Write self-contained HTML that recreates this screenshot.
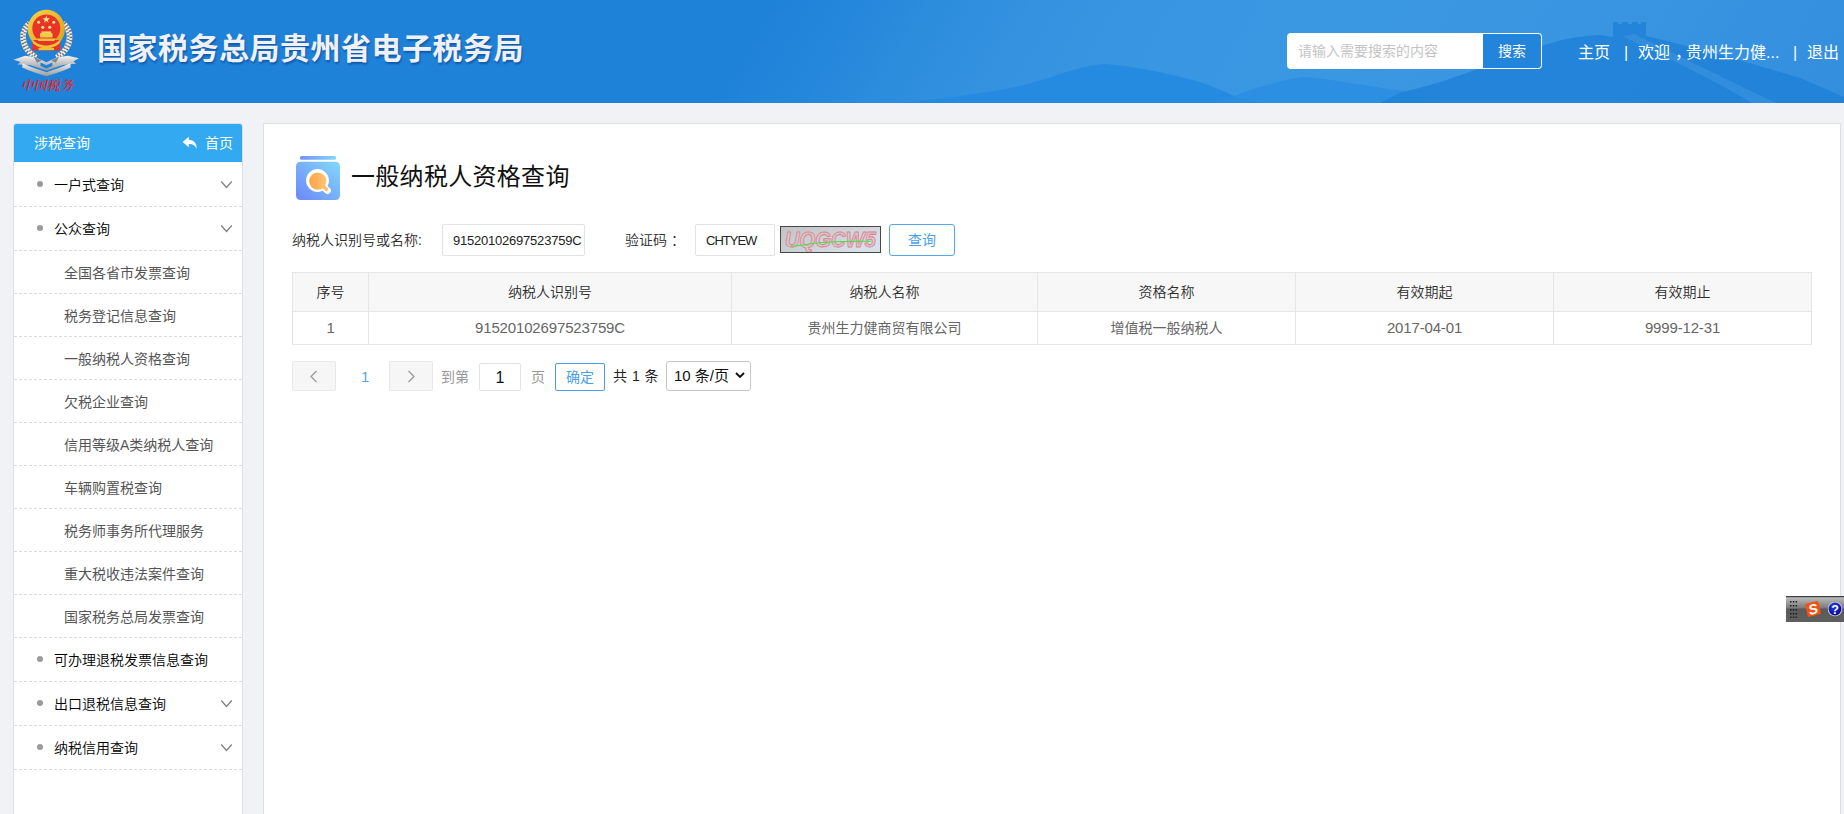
<!DOCTYPE html>
<html lang="zh-CN">
<head>
<meta charset="utf-8">
<title>一般纳税人资格查询</title>
<style>
*{box-sizing:border-box;margin:0;padding:0}
html,body{width:1844px;height:814px;overflow:hidden;background:#f0f2f5;
  font-family:"Liberation Sans","Noto Sans CJK SC",sans-serif;font-size:14px;color:#333}
.abs{position:absolute}
#hdr{position:absolute;left:0;top:0;width:1844px;height:103px;overflow:hidden;
  background:linear-gradient(120deg,#1f82d9 0px,#1f82d9 670.9px,#2587db 744.5px,#2d8ddd 818.1px,#3492e0 900.4px,#3996e2 1030.3px,#3a97e2 1194.8px,#3995e1 1411.3px,#348fdf 1622.7px)}
#hdr svg.bg{position:absolute;left:0;top:0}
#title{position:absolute;left:97px;top:27px;font-size:30px;line-height:44px;font-weight:bold;color:#f0f1f6;
  letter-spacing:0.5px;white-space:nowrap;text-shadow:1px 2px 2px rgba(0,40,110,.45)}
#search{position:absolute;left:1287px;top:33px;width:255px;height:36px;background:#fff;border-radius:4px;overflow:hidden}
#search .ph{position:absolute;left:11px;top:0;line-height:36px;font-size:14px;color:#c4c4c4;white-space:nowrap}
#search .btn{position:absolute;left:196px;top:1px;width:58px;height:34px;background:#2384dc;border-radius:0 3px 3px 0;color:#fff;
  font-size:14px;line-height:34px;text-align:center}
.nav{position:absolute;top:39px;color:#fff;font-size:16px;line-height:28px;white-space:nowrap}

#side{position:absolute;left:13px;top:123px;width:230px;height:700px;background:#fff;border:1px solid #dfe0e4;border-radius:3px 3px 0 0}
#side .head{position:absolute;left:0;top:0;width:228px;height:38px;background:#33a9f1;color:#fff;border-radius:2px 2px 0 0}
#side .head span{position:absolute;top:0;line-height:38px;font-size:14px}
.mi{position:absolute;left:0;width:228px;border-bottom:1px dashed #dcdcdc}
.mi.t{height:44px}
.mi.s{height:43px}
.mi span{position:absolute;top:0;white-space:nowrap;font-size:14px}
.mi.t span{left:40px;line-height:45px;color:#000;font-weight:350}
.mi.s span{left:50px;line-height:44px;color:#555}
.mi.t i{position:absolute;left:23px;top:17.5px;width:6px;height:6px;border-radius:50%;background:#9a9a9a}
.mi svg{position:absolute;left:206px;top:17.500px}

#main{position:absolute;left:263px;top:123px;width:1578px;height:700px;background:#fff;border:1px solid #dddee2}
#ptitle{position:absolute;left:351px;top:159px;font-size:24px;line-height:36px;color:#111;white-space:nowrap;letter-spacing:0.3px}
.lbl{position:absolute;top:224px;line-height:32px;font-size:14px;color:#2c2c2c;font-weight:350;white-space:nowrap}
.inp{position:absolute;top:224px;height:32px;border:1px solid #e2e2e2;border-radius:2px;background:#fff;
  font-size:13px;line-height:31px;color:#222;padding-left:10px;white-space:nowrap;overflow:hidden;letter-spacing:-0.22px}
#qbtn{position:absolute;left:889px;top:224px;width:66px;height:32px;border:1px solid #53a6ea;border-radius:3px;background:#fff;
  color:#4a9fe8;font-size:14px;line-height:30px;text-align:center}
table{position:absolute;left:292px;top:272px;width:1519px;border-collapse:collapse;table-layout:fixed}
th,td{border:1px solid #e6e6e6;text-align:center;font-weight:normal;font-size:14px;white-space:nowrap;padding:0}
th{height:39px;background:#f7f7f7;color:#2c2c2c;font-weight:350}
td{height:33px;color:#666;padding-bottom:3px}
td.n{font-size:15px;letter-spacing:-0.15px;padding-bottom:1px}
th{padding-bottom:2px}
.pg{position:absolute;font-size:14px;white-space:nowrap}
.pbtn{position:absolute;top:361px;width:44px;height:30px;background:#f6f6f6;border:1px solid #e8e8e8;border-radius:2px}
</style>
</head>
<body>
<div id="hdr">
<svg class="bg" width="1844" height="103" viewBox="0 0 1844 103">
  <path d="M900 103 C940 99,980 94,1010 88 C1050 80,1075 66,1105 64 C1135 66,1170 74,1200 82 C1215 87,1225 92,1237 97 L1262 103 Z" fill="#2389e0" opacity=".9"/>
  <path d="M1215 103 C1240 94,1275 80,1305 77 C1340 80,1375 88,1405 91 L1440 103 Z" fill="#2a8ce0" opacity=".75"/>
  <path d="M1380 103 L1402 92 C1440 84,1480 68,1520 54 C1545 44,1570 36,1600 35 L1613 37 L1613 22 L1618 22 L1618 24 L1622 24 L1622 22 L1628 22 L1628 24 L1632 24 L1632 22 L1638 22 L1638 24 L1641 24 L1641 22 L1646 22 L1646 36 C1690 46,1740 60,1800 78 L1844 97 L1844 103 Z" fill="#1e80d7" opacity=".82"/>
  <path d="M1622 36 L1634 34 C1670 52,1720 76,1776 103 L1752 103 C1710 78,1660 54,1622 36 Z" fill="#5aa8ea" opacity=".28"/>
</svg>
<svg class="abs" style="left:0;top:0" width="100" height="103" viewBox="0 0 100 103">
  <defs>
    <linearGradient id="slv" x1="0" y1="0" x2="0" y2="1"><stop offset="0" stop-color="#f2f2f2"/><stop offset=".5" stop-color="#c4c4c4"/><stop offset="1" stop-color="#9a9a9a"/></linearGradient>
    <linearGradient id="gld" x1="0" y1="0" x2="1" y2="1"><stop offset="0" stop-color="#f6d24a"/><stop offset=".5" stop-color="#e9b92c"/><stop offset="1" stop-color="#d9a01c"/></linearGradient>
  </defs>
  <!-- wreath -->
  <g fill="none" stroke-linecap="butt">
  <path id="wl" d="M36 57.500 C28 52.500,23 45,23 37 C23 31,25.500 26.500,29.500 23" stroke="#f1f1f1" stroke-width="5.600"/>
  <path d="M35.200 58.700 C26.500 53.500,21.600 45.500,21.600 37 C21.600 30.500,24.300 25.600,28.600 22" stroke="#4d5256" stroke-width="2.700" stroke-dasharray="1.500 1.700" opacity=".8"/>
  <path d="M36.800 56.300 C29.500 51.500,24.400 44.500,24.400 37 C24.400 31.500,26.700 27.400,30.400 24" stroke="#4d5256" stroke-width="2.700" stroke-dasharray="1.500 1.700" stroke-dashoffset="1.600" opacity=".7"/>
  <path d="M56.600 57.500 C64.600 52.500,69.600 45,69.600 37 C69.600 31,67.100 26.500,63.100 23" stroke="#f1f1f1" stroke-width="5.600"/>
  <path d="M57.400 58.700 C66.100 53.500,71 45.500,71 37 C71 30.500,68.300 25.600,64 22" stroke="#4d5256" stroke-width="2.700" stroke-dasharray="1.500 1.700" opacity=".8"/>
  <path d="M55.800 56.300 C63.100 51.500,68.200 44.500,68.200 37 C68.200 31.500,65.900 27.400,62.200 24" stroke="#4d5256" stroke-width="2.700" stroke-dasharray="1.500 1.700" stroke-dashoffset="1.600" opacity=".7"/>
  </g>
  <!-- ribbon -->
  <path d="M13.500 59.800 L25 55.800 L35.500 57.200 L46.400 62.200 L57.300 57.200 L68 55.800 L79 58.200 L73.500 61.200 L76 63.800 L63 65 L46.400 70.500 L30 65 L17.500 64.600 L20.500 62 Z" fill="url(#slv)"/>
  <path d="M22.500 63.200 C30 66.800,39 69.800,46.400 72.200 C53.800 69.800,62.800 66.800,70.300 63.200 L70.600 67.600 C62.500 71.500,53.500 74,46.400 76.200 C39.300 74,30.300 71.500,22.200 67.600 Z" fill="url(#slv)"/>
  <path d="M40.500 62.500 L46.400 65.200 L52.300 62.500 L52.300 66 L46.400 68.600 L40.500 66 Z" fill="#1f82d9"/>
  <path d="M33.500 56.500 L41.500 60.500 L37 62.800 Z M59.300 56.500 L51.300 60.500 L55.800 62.800 Z" fill="#6d7378" opacity=".8"/>
  <!-- emblem -->
  <ellipse cx="46.300" cy="29" rx="18.600" ry="19.200" fill="url(#gld)"/>
  <path d="M32.500 40 L60 40 L60.500 50.500 L32 50.500 Z" fill="#e8322a"/>
  <circle cx="46.300" cy="28.500" r="14" fill="#ea3328"/>
  <path d="M31.500 38.500 C36 43.500,41 45.500,46.300 45.500 C51.500 45.500,56.500 43.500,61 38.500 L59.500 43.500 C55 47,51 48.500,46.300 48.500 C41.500 48.500,37.500 47,33 43.500 Z" fill="#efc235"/>
  <rect x="38.500" y="48" width="15.500" height="2.200" fill="#efc235"/>
  <rect x="40" y="33" width="12.600" height="4.600" rx=".8" fill="#f2c94a"/>
  <rect x="41.500" y="31.400" width="9.600" height="1.800" fill="#f5d565"/>
  <path d="M36.500 38.500 L56 38.500 L54 41 L38.500 41 Z" fill="#f0c43d"/>
  <g fill="#ffe784">
    <path d="M46.300 15.500 L47.240 18.210 L50.100 18.270 L47.820 19.990 L48.650 22.740 L46.300 21.100 L43.950 22.740 L44.780 19.990 L42.500 18.270 L45.360 18.210 Z"/>
    <circle cx="38.600" cy="22.300" r="1.500"/><circle cx="53.800" cy="22.300" r="1.500"/><circle cx="42.800" cy="27.300" r="1.500"/><circle cx="49.700" cy="27.300" r="1.500"/>
  </g>
  <text x="46.800" y="89.800" text-anchor="middle" font-family="'Liberation Serif','Noto Serif CJK SC',serif" font-size="13" font-weight="600" font-style="italic" fill="#e6241a">中国税务</text>
</svg>
<div id="title">国家税务总局贵州省电子税务局</div>
<div id="search"><div class="ph">请输入需要搜索的内容</div><div class="btn">搜索</div></div>
<div class="nav" style="left:1578px">主页</div>
<div class="nav" style="left:1624px">|</div>
<div class="nav" style="left:1638px">欢迎<span style="margin:0 -5px 0 5px">，</span>贵州生力健...</div>
<div class="nav" style="left:1793px">|</div>
<div class="nav" style="left:1807px">退出</div>
</div>

<div id="side">
  <div class="head"><span style="left:20px">涉税查询</span><span style="left:191px">首页</span>
    <svg class="abs" style="left:168px;top:12px" width="16" height="14" viewBox="0 0 16 14"><path d="M6.800 0.800 L0.600 6 L6.800 11.200 L6.800 8 C10.600 7.900,12.800 9.200,14.600 12.800 C14.900 7.400,11.800 4,6.800 3.800 Z" fill="#fff"/></svg>
  </div>
  <div class="mi t" style="top:39px"><i></i><span>一户式查询</span><svg width="13" height="8" viewBox="0 0 13 8"><path d="M1.200 0.500 L6.500 6.500 L11.800 0.500" fill="none" stroke="#7f7f7f" stroke-width="1.250"/></svg></div>
  <div class="mi t" style="top:83px"><i></i><span>公众查询</span><svg width="13" height="8" viewBox="0 0 13 8"><path d="M1.200 0.500 L6.500 6.500 L11.800 0.500" fill="none" stroke="#7f7f7f" stroke-width="1.250"/></svg></div>
  <div class="mi s" style="top:127px"><span>全国各省市发票查询</span></div>
  <div class="mi s" style="top:170px"><span>税务登记信息查询</span></div>
  <div class="mi s" style="top:213px"><span>一般纳税人资格查询</span></div>
  <div class="mi s" style="top:256px"><span>欠税企业查询</span></div>
  <div class="mi s" style="top:299px"><span>信用等级A类纳税人查询</span></div>
  <div class="mi s" style="top:342px"><span>车辆购置税查询</span></div>
  <div class="mi s" style="top:385px"><span>税务师事务所代理服务</span></div>
  <div class="mi s" style="top:428px"><span>重大税收违法案件查询</span></div>
  <div class="mi s" style="top:471px"><span>国家税务总局发票查询</span></div>
  <div class="mi t" style="top:514px"><i></i><span>可办理退税发票信息查询</span></div>
  <div class="mi t" style="top:558px"><i></i><span>出口退税信息查询</span><svg width="13" height="8" viewBox="0 0 13 8"><path d="M1.200 0.500 L6.500 6.500 L11.800 0.500" fill="none" stroke="#7f7f7f" stroke-width="1.250"/></svg></div>
  <div class="mi t" style="top:602px"><i></i><span>纳税信用查询</span><svg width="13" height="8" viewBox="0 0 13 8"><path d="M1.200 0.500 L6.500 6.500 L11.800 0.500" fill="none" stroke="#7f7f7f" stroke-width="1.250"/></svg></div>
</div>

<div id="main"></div>
<div id="ptitle">一般纳税人资格查询</div>
<div class="lbl" style="left:292px">纳税人识别号或名称:</div>
<div class="inp" style="left:442px;width:143px">91520102697523759C</div>
<div class="lbl" style="left:625px">验证码<span style="margin-left:4px">：</span></div>
<div class="inp" style="left:695px;width:80px;letter-spacing:-1px">CHTYEW</div>
<div id="qbtn">查询</div>

<table>
<colgroup><col style="width:76px"><col style="width:363px"><col style="width:306px"><col style="width:258px"><col style="width:258px"><col style="width:258px"></colgroup>
<tr><th>序号</th><th>纳税人识别号</th><th>纳税人名称</th><th>资格名称</th><th>有效期起</th><th>有效期止</th></tr>
<tr><td class="n">1</td><td class="n">91520102697523759C</td><td>贵州生力健商贸有限公司</td><td>增值税一般纳税人</td><td class="n">2017-04-01</td><td class="n">9999-12-31</td></tr>
</table>

<svg class="abs" style="left:292px;top:152px" width="52" height="52" viewBox="0 0 52 52">
  <defs>
    <linearGradient id="ig" x1="0" y1="1" x2="1" y2="0"><stop offset="0" stop-color="#6d86f8"/><stop offset="1" stop-color="#82d9fb"/></linearGradient>
    <linearGradient id="ig2" x1="0" y1="0" x2="1" y2="0"><stop offset="0" stop-color="#7690f8"/><stop offset="1" stop-color="#84d4fb"/></linearGradient>
    <linearGradient id="og" x1="0" y1="0" x2="1" y2="0"><stop offset="0" stop-color="#ffa346"/><stop offset="1" stop-color="#ffc474"/></linearGradient>
  </defs>
  <rect x="8" y="4" width="36" height="3.800" rx="1.600" fill="url(#ig2)"/>
  <rect x="4" y="9.700" width="44" height="38.300" rx="4.500" fill="url(#ig)"/>
  <path d="M32 35.500 L35.400 38.500" stroke="#fff" stroke-width="7" stroke-linecap="round"/>
  <circle cx="25.500" cy="28.500" r="11.400" fill="#fff"/>
  <path d="M31 34 L34.300 37.300" stroke="#ffbb66" stroke-width="3.600" stroke-linecap="round"/>
  <circle cx="25.800" cy="29.100" r="8.600" fill="url(#og)"/>
</svg>

<svg class="abs" style="left:780px;top:226px" width="101" height="27" viewBox="0 0 101 27">
  <defs><linearGradient id="cg" x1="0" y1="0" x2="1" y2=".6"><stop offset="0" stop-color="#c2c2c3"/><stop offset=".5" stop-color="#cdd0d4"/><stop offset="1" stop-color="#d8e1ea"/></linearGradient></defs>
  <rect x="0" y="0" width="101" height="27" fill="url(#cg)"/>
  <text x="5" y="20.800" font-family="'Liberation Sans',sans-serif" font-size="21.500" font-weight="bold" font-style="italic" fill="#d4d2d7" stroke="#dc808b" stroke-width=".850" stroke-linejoin="round" textLength="91" lengthAdjust="spacingAndGlyphs">UQGCW5</text>
  <text x="5.300" y="20.600" font-family="'Liberation Sans',sans-serif" font-size="21.500" font-weight="normal" font-style="italic" fill="none" stroke="#e0a0a8" stroke-width=".450" stroke-linejoin="round" textLength="90.400" lengthAdjust="spacingAndGlyphs">UQGCW5</text>
  <path d="M10.300 20.200 C20 20,28 17.600,37.800 16.900 C44 16.300,50 15.900,55.700 15.700 C68 15.300,80 15.400,91.500 15.200" fill="none" stroke="#45e045" stroke-width="1.050"/>
  <rect x=".5" y=".5" width="100" height="26" fill="none" stroke="#474747"/>
</svg>

<div class="pbtn" style="left:292px"><svg class="abs" style="left:16px;top:8px" width="10" height="13" viewBox="0 0 10 13"><path d="M7.500 1 L2 6.500 L7.500 12" fill="none" stroke="#9a9a9a" stroke-width="1.300"/></svg></div>
<div class="pg" style="left:361px;top:361px;line-height:32px;color:#5aa5e6;font-size:15px">1</div>
<div class="pbtn" style="left:389px"><svg class="abs" style="left:16px;top:8px" width="10" height="13" viewBox="0 0 10 13"><path d="M2.500 1 L8 6.500 L2.500 12" fill="none" stroke="#9a9a9a" stroke-width="1.300"/></svg></div>
<div class="pg" style="left:441px;top:363px;line-height:29px;color:#999">到第</div>
<div class="pg" style="left:479px;top:363px;width:42px;height:28px;border:1px solid #e2e2e2;border-radius:2px;background:#fff;text-align:center;line-height:27px;color:#111;font-size:16px">1</div>
<div class="pg" style="left:531px;top:363px;line-height:29px;color:#999">页</div>
<div class="pg" style="left:555px;top:363px;width:50px;height:28px;border:1px solid #4a9fe8;border-radius:2px;background:#fff;text-align:center;line-height:26px;color:#4a9fe8">确定</div>
<div class="pg" style="left:613px;top:362px;line-height:29px;color:#222;word-spacing:1px">共 1 条</div>
<div class="pg" style="left:666px;top:361px;width:85px;height:30px;border:1px solid #c6c6c6;border-radius:3px;background:#fff;line-height:28px;color:#111;padding-left:7px;font-size:15px">10 条/页
  <svg class="abs" style="left:68px;top:10px" width="10" height="7" viewBox="0 0 10 7"><path d="M1 1 L5 5 L9 1" fill="none" stroke="#111" stroke-width="1.900"/></svg></div>

<svg class="abs" style="left:1786px;top:596px" width="58" height="26" viewBox="0 0 58 26">
  <defs>
    <linearGradient id="imeg" x1="0" y1="0" x2="0" y2="1"><stop offset="0" stop-color="#c4c4c4"/><stop offset=".45" stop-color="#7c7c7c"/><stop offset=".5" stop-color="#5b5b5b"/><stop offset="1" stop-color="#5e5e5e"/></linearGradient>
    <radialGradient id="qg" cx=".4" cy=".3" r=".8"><stop offset="0" stop-color="#2a3fe0"/><stop offset=".7" stop-color="#0a12a8"/><stop offset="1" stop-color="#050a6e"/></radialGradient>
  </defs>
  <rect x="0" y="0" width="58" height="26" fill="url(#imeg)"/>
  <rect x="0" y="0" width="58" height="1.200" fill="#3c3c3c"/>
  <g fill="#1d1d1d">
    <rect x="4" y="5" width="1.500" height="1.500"/><rect x="6.800" y="5" width="1.500" height="1.500"/><rect x="9.600" y="5" width="1.500" height="1.500"/>
    <rect x="4" y="9" width="1.500" height="1.500"/><rect x="6.800" y="9" width="1.500" height="1.500"/><rect x="9.600" y="9" width="1.500" height="1.500"/>
    <rect x="4" y="13" width="1.500" height="1.500"/><rect x="6.800" y="13" width="1.500" height="1.500"/><rect x="9.600" y="13" width="1.500" height="1.500"/>
    <rect x="4" y="17" width="1.500" height="1.500"/><rect x="6.800" y="17" width="1.500" height="1.500"/><rect x="9.600" y="17" width="1.500" height="1.500"/>
    <rect x="4" y="20.600" width="1.500" height="1.200"/><rect x="6.800" y="20.600" width="1.500" height="1.200"/><rect x="9.600" y="20.600" width="1.500" height="1.200"/>
  </g>
  <g transform="rotate(-14 27 13)">
    <rect x="20.200" y="6.200" width="13.600" height="13.600" rx="1.600" fill="#f4500f"/>
    <text x="27" y="18" text-anchor="middle" font-family="'Liberation Sans',sans-serif" font-size="14" font-weight="bold" font-style="italic" fill="#fff">S</text>
  </g>
  <circle cx="49" cy="13" r="7.300" fill="#c9c9d4"/>
  <circle cx="49" cy="13" r="6.400" fill="url(#qg)"/>
  <text x="49" y="17.600" text-anchor="middle" font-family="'Liberation Sans',sans-serif" font-size="12.500" font-weight="bold" fill="#fff">?</text>
</svg>

</body>
</html>
